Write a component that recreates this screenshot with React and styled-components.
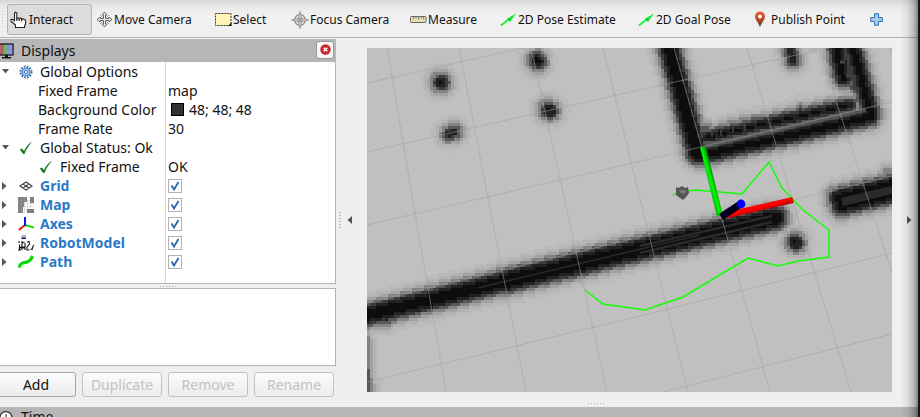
import React from "react";
import styled, { createGlobalStyle } from "styled-components";

const Global = createGlobalStyle`
  * { box-sizing: border-box; }
  body {
    margin: 0;
    background: #efefef;
    color: #111;
    font-family: "Noto Sans", "Open Sans", sans-serif;
    font-size: 14px;
    overflow: hidden;
  }
  button { font: inherit; color: inherit; }
  svg { display: block; }
`;

const Window = styled.div`
  position: relative;
  display: flex;
  flex-direction: column;
  height: 100vh;
  overflow: hidden;
`;

const EdgeShade = styled.div`
  position: absolute;
  top: 0;
  right: 0;
  bottom: 0;
  width: 20px;
  pointer-events: none;
  background: linear-gradient(
    to right,
    rgba(0, 0, 0, 0) 0,
    rgba(0, 0, 0, 0.08) 8px,
    rgba(0, 0, 0, 0.24) 14px,
    rgba(0, 0, 0, 0.45) 18px,
    #151719 18px
  );
`;

const Toolbar = styled.header`
  display: flex;
  flex: none;
  align-items: center;
  height: 38px;
  padding-top: 2px;
  padding-left: 7px;
  border-bottom: 1px solid #b4b4b4;
  background: linear-gradient(#d6d6d6 0, #e9e9e9 6px, #f1f1f1 16px, #efefef);
  background-color: #efefef;
`;

const Handle = styled.span`
  flex: none;
  width: 1px;
  height: 17px;
  margin: 0 0 0 -5px;
  background: repeating-linear-gradient(#bbb 0 1px, transparent 1px 3px);
`;

const Tool = styled.button`
  display: flex;
  flex: none;
  align-items: center;
  gap: 1px;
  width: ${(p) => p.$w}px;
  height: 31px;
  margin: 0;
  margin-right: ${(p) => (p.$active ? 3 : 0)}px;
  padding: 0 ${(p) => (p.$active ? 2 : 0)}px;
  border: 1px solid ${(p) => (p.$active ? "#b2b2b2" : "transparent")};
  border-radius: 3px;
  background: ${(p) => (p.$active ? "#dcdcdc" : "transparent")};
  font-size: 12px;
  line-height: 18px;
  white-space: nowrap;
  svg { flex: none; }
`;

const FirstTool = styled(Tool)`
  margin-left: 4px;
`;

const Main = styled.div`
  display: flex;
  flex: 1;
  min-height: 0;
`;

const LeftDock = styled.section`
  display: flex;
  flex: none;
  flex-direction: column;
  width: 336px;
  padding-top: 1px;
`;

const DockTitle = styled.div`
  display: flex;
  flex: none;
  align-items: center;
  height: 23px;
  background: #b6b6b6;
  h2 {
    flex: 1;
    margin: 0 0 0 7px;
    font-size: 14px;
    font-weight: 400;
    line-height: 20px;
  }
`;

const CloseButton = styled.button`
  display: grid;
  place-items: center;
  width: 18px;
  height: 18px;
  margin: 0 2px 2px 0;
  padding: 0;
  border: 1px solid #999;
  border-radius: 3px;
  background: #f6f6f6;
`;

const Tree = styled.div`
  flex: 1;
  min-height: 0;
  border-right: 1px solid #b4b4b4;
  border-bottom: 1px solid #b4b4b4;
  background: linear-gradient(#d4d4d4, #d4d4d4) 165px 0 / 1px 100% no-repeat #fff;
`;

const TreeRow = styled.div`
  display: grid;
  grid-template-columns: 166px 1fr;
  align-items: center;
  height: 19px;
  line-height: 19px;
  white-space: nowrap;
`;

const NameCell = styled.div`
  display: flex;
  align-items: center;
  height: 19px;
  padding-left: ${(p) => p.$indent || 0}px;
`;

const Name = styled.span`
  margin-left: ${(p) => (p.$plain ? 0 : 6)}px;
  color: ${(p) => (p.$link ? "#2b79c8" : "#111")};
  font-weight: ${(p) => (p.$link ? 700 : 400)};
`;

const IconSlot = styled.span`
  display: grid;
  place-items: center;
  width: 16px;
  height: 16px;
`;

const Expander = styled.button`
  display: grid;
  place-items: center start;
  width: 18px;
  height: 19px;
  padding: 0 0 0 2px;
  border: 0;
  background: none;
`;

const Value = styled.div`
  display: flex;
  align-items: center;
  gap: 5px;
  padding-left: 2px;
`;

const Swatch = styled.span`
  width: 13px;
  height: 13px;
  margin-left: 3px;
  border: 1px solid #000;
  background: #303030;
`;

const CheckLabel = styled.label`
  display: grid;
  width: 14px;
  height: 14px;
  > * { grid-area: 1 / 1; }
  svg { pointer-events: none; visibility: hidden; }
  input:checked + svg { visibility: visible; }
`;

const CheckInput = styled.input`
  appearance: none;
  width: 14px;
  height: 14px;
  margin: 0;
  border: 1px solid #b2b2b2;
  background: #fff;
`;

const HSplitter = styled.div`
  display: flex;
  flex: none;
  align-items: center;
  justify-content: center;
  height: ${(p) => p.$h}px;
  &::after {
    content: "";
    width: 16px;
    height: 1px;
    background: repeating-linear-gradient(to right, #aaa 0 1px, transparent 1px 3px);
  }
`;

const BottomSplitter = styled(HSplitter)`
  padding: 7px 68px 0 0;
`;

const Description = styled.div`
  flex: none;
  height: 78px;
  border: solid #b4b4b4;
  border-width: 1px 1px 1px 0;
  background: #fff;
`;

const ButtonRow = styled.div`
  display: grid;
  grid-template-columns: repeat(4, 1fr);
  flex: none;
  gap: 6px;
  margin-left: -4px;
  padding: 6px 2px 10px 0;
`;

const PushButton = styled.button`
  height: 25px;
  padding: 0;
  border: 1px solid #a6a6a6;
  border-radius: 3px;
  background: linear-gradient(#fcfcfc, #ececec);
  line-height: 20px;
  &:disabled { border-color: #c2c2c2; color: #c2c2c2; }
`;

const VSplitter = styled.div`
  display: flex;
  flex: none;
  align-items: center;
  width: 6px;
  padding: 0 1px 6px 3px;
  &::after {
    content: "";
    width: 2px;
    height: 16px;
    background: repeating-linear-gradient(#bbb 0 1px, transparent 1px 3px);
  }
`;

const Collapse = styled.button`
  display: flex;
  flex: none;
  align-items: center;
  justify-content: center;
  width: ${(p) => p.$w}px;
  padding: 0 ${(p) => p.$right || 0}px 6px ${(p) => p.$left || 0}px;
  border: 0;
  background: none;
`;

const ViewArea = styled.main`
  display: flex;
  flex: 1;
  flex-direction: column;
  min-width: 0;
  padding-top: 10px;
`;

const View = styled.div`
  flex: 1;
  min-height: 0;
  svg { width: 100%; height: 100%; }
`;

const TimeDock = styled.footer`
  display: flex;
  flex: none;
  align-items: flex-start;
  gap: 7px;
  height: 10px;
  padding-top: 3px;
  overflow: hidden;
  background: #b6b6b6;
  line-height: 14px;
  svg { flex: none; }
`;

/* ---------- toolbar icons ---------- */

const HandIcon = () => (
  <svg width="18" height="18" viewBox="0 0 18 18" fill="#fff" stroke="#222" strokeWidth="1.1" strokeLinejoin="round">
    <path d="M5.5 16.5V14L1.2 10.5 .8 8.6 2.400 8.2 4.500 10V2L5.500 1.200 6.800 2V8L8 6.800 9.2 7.400V8.4L10.4 7 11.600 7.600V9L13 7.800 15.600 9.2V13L14.6 14.6V16.5Z" />
    <path d="M6.800 8V10M9.2 8.4V10M11.600 9V10.4" />
  </svg>
);

const MoveIcon = () => (
  <svg width="17" height="17" viewBox="0 0 17 17" fill="#eee" stroke="#666" strokeWidth="1">
    <path d="M8.5 1 11 4H9.5V7.5H13V6L16 8.5 13 11V9.5H9.5V13H11L8.5 16 6 13H7.5V9.5H4V11L1 8.5 4 6V7.5H7.5V4H6Z" />
    <path d="M4 4 7 7M13 4 10 7M4 13 7 10M13 13 10 10" strokeDasharray="1 1" />
  </svg>
);

const SelectIcon = () => (
  <svg width="17" height="15" viewBox="0 0 17 15">
    <rect x=".5" y="1.500" width="15.500" height="12" fill="#fff5b8" stroke="#333" strokeDasharray="2 1" />
    <path d="M16.500 10.500V14H13Z" fill="#111" />
  </svg>
);

const FocusIcon = () => (
  <svg width="18" height="18" viewBox="0 0 18 18" fill="none" stroke="#888" strokeWidth="1.2">
    <circle cx="9" cy="9" r="5.3" />
    <circle cx="9" cy="9" r="2.5" />
    <path d="M9 .5 10 4V14L9 17.5 8 14V4ZM.5 9 4 8H14L17.5 9 14 10H4Z" fill="#ddd" strokeWidth=".8" />
  </svg>
);

const RulerIcon = () => (
  <svg width="17" height="9" viewBox="0 0 17 9">
    <rect x=".5" y="1.5" width="15.5" height="6" rx="1" fill="#e8dfb4" stroke="#666" />
    <path d="M3.5 2V4.5M6 2V4M8.5 2V4.5M11 2V4M13.5 2V4.5" stroke="#776" strokeWidth=".8" />
  </svg>
);

const ArrowIcon = () => (
  <svg width="17" height="15" viewBox="0 0 17 15">
    <path d="M.8 13.500 8 8" stroke="#1ef23c" strokeWidth="2" />
    <path d="M16 1.500 10 10 9 8.800 7.800 8.800 6.800 6.800Z" fill="#10ee38" />
    <path d="M8.500 6.800 10 8.500" stroke="#138a28" />
  </svg>
);

const PinIcon = () => (
  <svg width="17" height="17" viewBox="0 0 17 17">
    <defs>
      <linearGradient id="pin" x2="0" y2="1">
        <stop stopColor="#ee5838" />
        <stop offset=".55" stopColor="#b34d2c" />
        <stop offset="1" stopColor="#3a3a16" />
      </linearGradient>
    </defs>
    <path d="M7 16.500C6 12 2 9.5 2 5.600A5 5 0 0 1 12 5.600C12 9.5 8 12 7 16.500Z" fill="url(#pin)" />
    <circle cx="7" cy="5.5" r="1.9" fill="#fff" />
  </svg>
);

const PlusIcon = () => (
  <svg width="13" height="13" viewBox="0 0 13 13">
    <path d="M4.5 .7H8.5V4.5H12.3V8.5H8.5V12.3H4.5V8.5H.7V4.5H4.5Z" fill="#a9cbea" stroke="#3572b4" strokeLinejoin="round" />
  </svg>
);

/* ---------- tree icons ---------- */

const OpenMark = () => (
  <svg width="7" height="5" viewBox="0 0 7 5"><path d="M0 0H7L3.5 4.5Z" fill="#555" /></svg>
);
const ClosedMark = ({ flip }) => (
  <svg width="5" height="8" viewBox="0 0 5 8">
    <path d={flip ? "M5 0V8L.5 4Z" : "M0 0V8L4.5 4Z"} fill="#555" />
  </svg>
);

const MonitorIcon = () => (
  <svg width="14" height="16" viewBox="0 0 14 16">
    <defs>
      <linearGradient id="screen">
        <stop stopColor="#c55" />
        <stop offset=".35" stopColor="#a66" />
        <stop offset=".4" stopColor="#6bb56f" />
        <stop offset=".65" stopColor="#6bb57f" />
        <stop offset=".72" stopColor="#88e" />
        <stop offset="1" stopColor="#a9e" />
      </linearGradient>
    </defs>
    <rect x="-2" y="1" width="15" height="11" fill="url(#screen)" stroke="#111" strokeWidth="1.2" />
    <path d="M5 12H8V14H11V15.5H2V14H5Z" fill="#111" />
  </svg>
);

const GearIcon = () => (
  <svg width="14" height="14" viewBox="0 0 14 14" fill="none">
    <circle cx="7" cy="7" r="5.5" stroke="#3d74b8" strokeWidth="2" strokeDasharray="1.7 1.18" />
    <circle cx="7" cy="7" r="4" fill="#a9c8ea" stroke="#4a80c0" />
    <circle cx="7" cy="7" r="1.6" fill="#fff" stroke="#4a80c0" />
  </svg>
);

const TickIcon = () => (
  <svg width="14" height="14" viewBox="0 0 14 14">
    <path d="M.8 8.5 3 7.5 5 10C7 6 9.5 2.5 13.3 .6 10 4.2 7.5 8 5.5 13H4.2Z" fill="#1e7a24" />
  </svg>
);

const GridIcon = () => (
  <svg width="14" height="10" viewBox="0 0 14 10" fill="none" stroke="#444" strokeWidth="1.2">
    <path d="M7 1 13 5 7 9 1 5ZM4 3 10 7M10 3 4 7" />
  </svg>
);

const MapIcon = () => (
  <svg width="16" height="16" viewBox="0 0 16 16">
    <path d="M3.5 0V16M6.5 5V16M9.5 3V12M12.5 6V12M0 3.5H16M0 6.5H16M0 9.5H16M0 12.5H16" stroke="#ccc" strokeWidth=".6" />
    <path d="M0 0H9V5H6V10H5V16H0ZM12 0H16V6H12ZM9 12H16V16H9Z" fill="#808080" />
    <path d="M3.5 0V16M6.5 0V5M0 3.5H9M0 6.5H6M0 9.5H5M0 12.5H5" stroke="#999" strokeWidth=".5" />
  </svg>
);

const AxesIcon = () => (
  <svg width="16" height="16" viewBox="0 0 16 16" strokeWidth="2">
    <path d="M7 9 .8 14" stroke="#e11" />
    <path d="M7 9 16 11.5" stroke="#1d1" />
    <path d="M7 10V1" stroke="#11e" />
  </svg>
);

const RobotIcon = () => (
  <svg width="16" height="16" viewBox="0 0 16 16" fill="none" stroke="#151515" strokeWidth="1.1">
    <path d="M3.500 1.5 6 .6 8 1.5" stroke="#779" />
    <path d="M3.5 3.2H7.8" stroke="#225" strokeWidth="1.8" />
    <path d="M1 6V8M1.500 9.500V15M0 15H3M4 6V15M4 8 6.500 7M7 8V15M9 7 11 6.5 11.5 9 9 12V15H11.5M12.500 14 14 14.5 15.5 10" />
    <path d="M1 12.500H7" strokeWidth="1.8" />
  </svg>
);

const PathIcon = () => (
  <svg width="16" height="14" viewBox="0 0 16 14">
    <path d="M1 12.5C3 6.5 5.5 8.5 9 7S13 4.5 14.5 1" fill="none" stroke="#0ad80a" strokeWidth="3.2" />
  </svg>
);

const ClockIcon = () => (
  <svg width="14" height="14" viewBox="0 0 14 14">
    <circle cx="6" cy="7.5" r="6" fill="#fff" stroke="#444" strokeWidth="1.5" />
    <path d="M6 4V8H9" fill="none" stroke="#222" />
  </svg>
);

/* ---------- map drawing ---------- */

// Obstacles as [x1, y1, x2, y2, half width of the solid core]
const WALLS = [
  [666, 36, 697, 153, 5],
  [700, 156, 870, 117, 3],
  [707, 137, 850, 105, 1],
  [850, 36, 871, 115, 3],
  [834, 36, 843, 78, 3],
  [840, 36, 856, 90, -3],
  [838, 198, 900, 183, 4],
  [841, 206, 900, 192, 4],
  [355, 318, 503, 282, 5],
  [503, 282, 620, 254, 6],
  [620, 254, 775, 218, 6],
  [360, 340, 364, 400, 0],
  [787, 36, 793, 61, 0],
  [441, 82, 441, 83, 2],
  [537, 60, 538, 62, 2],
  [449, 134, 454, 132, 0],
  [548, 110, 550, 111, 2],
  [795, 242, 796, 243, 2],
];

// Small bumps of half-known cells next to the walls: [x, y, offset]
const BUMPS = [
  [707, 129, -3], [721, 128, -4], [732, 125, -4], [744, 121, -4], [754, 120, -4],
  [766, 118, -5], [801, 109, -3], [640, 236, -6], [887, 171, -5], [812, 45, -8],
  [402, 312, -1], [386, 320, -2],
];

const LEVELS = [
  [0, "#0d0d0d"], [3, "#222"], [4.5, "#3c3c3c"], [6.5, "#585858"], [9, "#848484"],
  [11.5, "#a3a3a3"], [14.5, "#b3b3b3"], [18, "#bbb"],
];

const distance = (px, py, [x1, y1, x2, y2]) => {
  const dx = x2 - x1;
  const dy = y2 - y1;
  const t = Math.max(0, Math.min(1, ((px - x1) * dx + (py - y1) * dy) / (dx * dx + dy * dy)));
  return Math.hypot(px - x1 - t * dx, py - y1 - t * dy);
};

const CELL = 3;

const buildCells = () => {
  const paths = LEVELS.map(() => "");
  for (let y = 48; y < 392; y += CELL) {
    for (let x = 367; x < 892; x += CELL) {
      const cx = x + CELL / 2;
      const cy = y + CELL / 2;
      let best = 99;
      for (const w of WALLS) best = Math.min(best, distance(cx, cy, w) - w[4]);
      for (const [bx, by, off] of BUMPS) best = Math.min(best, Math.hypot(cx - bx, cy - by) - off);
      const level = LEVELS.findIndex(([limit]) => best <= limit);
      if (level >= 0) paths[level] += `M${x} ${y}h${CELL}v${CELL}h-${CELL}z`;
    }
  }
  return paths;
};

const CELLS = buildCells();

const GRID_LINES = [
  "M387 48 415 213 446 392", "M459 48 492 218 526 392", "M531 48 568 215 607 392",
  "M603 48 649 235 688 392", "M674 48 725 230 770 392", "M747 48 810 258 851 392",
  "M819 48 838 107 892 272", "M890 48 892 53",
  "M367 83 523 48", "M367 152 630 92 828 48", "M367 225 620 166 892 102",
  "M367 303 640 237 892 176", "M367 382 640 316 892 253", "M663 392 892 334",
].join("");

const MapView = () => (
  <svg viewBox="367 48 525 344" preserveAspectRatio="xMidYMid slice" role="img" aria-label="Map view">
    <defs>
      <linearGradient id="green" gradientUnits="userSpaceOnUse" x1="708" y1="182" x2="715" y2="180">
        <stop stopColor="#0b0" /><stop offset=".4" stopColor="#0f0" /><stop offset="1" stopColor="#080" />
      </linearGradient>
      <linearGradient id="red" gradientUnits="userSpaceOnUse" x1="758" y1="204" x2="760" y2="212">
        <stop stopColor="#f00" /><stop offset=".5" stopColor="#f00" /><stop offset="1" stopColor="#900" />
      </linearGradient>
    </defs>
    <rect x="367" y="48" width="525" height="344" fill="#c0c0c0" />
    <g shapeRendering="crispEdges">
      {CELLS.map((d, i) => <path key={i} d={d} fill={LEVELS[i][1]} />)}
    </g>
    <g fill="none" stroke="#2a2a2a" strokeWidth="1.5">
      <path d="M478 288 620 254 700 235" />
      <path d="M640 253 772 222M640 246 772 216" strokeWidth="2.5" />
      <path d="M842 202 892 190" strokeWidth="8" />
      <path d="M712 130V137M721 128V136M733 125V133M745 122V131" stroke="#444" />
      <path d="M840 62H845M846 76H850M850 88H854" stroke="#444" strokeWidth="3" />
    </g>
    <path d="M704 147 866 110" stroke="#5c5c5c" strokeWidth="4" opacity=".7" />
    <path d={GRID_LINES} fill="none" stroke="#a0a0a0" strokeOpacity=".55" />
    <path
      d="M673 195 682 192 696 190 742 194 769 162 782 188 803 210 829 230 829 257 798 261 778 266 748 258 683 297 645 310 603 304 585 290"
      fill="none" stroke="#1f0" strokeWidth="1.5"
    />
    <path d="M676 187 679 188 682 186 685 188 688 187 689 193 686 197 683 200 680 198 676 195Z" fill="#555" />
    <path d="M679 190H686L685 194 680 193Z" fill="#777" />
    <path d="M723 216 793 200" stroke="url(#red)" strokeWidth="6" />
    <path d="M703 147 720 216" stroke="url(#green)" strokeWidth="6" />
    <path d="M721 217 739 205" stroke="#00001c" strokeWidth="7" />
    <circle cx="741" cy="204" r="4.4" fill="#00f" />
  </svg>
);

/* ---------- page ---------- */

const TOOLS = [
  { label: "Move Camera", icon: <MoveIcon />, w: 119 },
  { label: "Select", icon: <SelectIcon />, w: 76 },
  { label: "Focus Camera", icon: <FocusIcon />, w: 119 },
  { label: "Measure", icon: <RulerIcon />, w: 90 },
  { label: "2D Pose Estimate", icon: <ArrowIcon />, w: 138 },
  { label: "2D Goal Pose", icon: <ArrowIcon />, w: 115 },
  { label: "Publish Point", icon: <PinIcon />, w: 117 },
];

const DISPLAYS = [
  ["Grid", <GridIcon />], ["Map", <MapIcon />], ["Axes", <AxesIcon />],
  ["RobotModel", <RobotIcon />], ["Path", <PathIcon />],
];

const Branch = ({ label, icon, open, link, children }) => (
  <TreeRow>
    <NameCell>
      <Expander aria-label={`Toggle ${label}`} aria-expanded={!!open}>
        {open ? <OpenMark /> : <ClosedMark />}
      </Expander>
      <IconSlot>{icon}</IconSlot>
      <Name $link={link}>{label}</Name>
    </NameCell>
    <Value>{children}</Value>
  </TreeRow>
);

const Property = ({ label, children }) => (
  <TreeRow>
    <NameCell $indent={38}><Name $plain>{label}</Name></NameCell>
    <Value>{children}</Value>
  </TreeRow>
);

const Check = ({ label }) => (
  <CheckLabel>
    <CheckInput type="checkbox" defaultChecked aria-label={label} />
    <svg width="14" height="14" viewBox="0 0 14 14">
      <path d="M3.5 6.5 6 10.5 10.5 3" fill="none" stroke="#2a66a8" strokeWidth="1.8" />
    </svg>
  </CheckLabel>
);

export default function App() {
  return (
    <Window>
      <Global />
      <Toolbar>
        <Handle />
        <FirstTool $w={85} $active><HandIcon />Interact</FirstTool>
        {TOOLS.map((t) => (
          <Tool key={t.label} $w={t.w}>{t.icon}{t.label}</Tool>
        ))}
        <Tool $w={48} aria-label="Add tool"><PlusIcon /></Tool>
      </Toolbar>
      <Main>
        <LeftDock>
          <DockTitle>
            <MonitorIcon />
            <h2>Displays</h2>
            <CloseButton aria-label="Close displays">
              <svg width="11" height="11" viewBox="0 0 11 11">
                <circle cx="5.5" cy="5.5" r="5.2" fill="#c9252d" />
                <path d="M3.7 3.7 7.3 7.3M7.3 3.7 3.7 7.3" stroke="#fff" strokeWidth="1.5" />
              </svg>
            </CloseButton>
          </DockTitle>
          <Tree>
            <Branch label="Global Options" icon={<GearIcon />} open />
            <Property label="Fixed Frame">map</Property>
            <Property label="Background Color"><Swatch />48; 48; 48</Property>
            <Property label="Frame Rate">30</Property>
            <Branch label="Global Status: Ok" icon={<TickIcon />} open />
            <TreeRow>
              <NameCell $indent={38}>
                <IconSlot><TickIcon /></IconSlot>
                <Name>Fixed Frame</Name>
              </NameCell>
              <Value>OK</Value>
            </TreeRow>
            {DISPLAYS.map(([label, icon]) => (
              <Branch key={label} label={label} icon={icon} link><Check label={label} /></Branch>
            ))}
          </Tree>
          <HSplitter $h={4} />
          <Description />
          <ButtonRow>
            <PushButton>Add</PushButton>
            <PushButton disabled>Duplicate</PushButton>
            <PushButton disabled>Remove</PushButton>
            <PushButton disabled>Rename</PushButton>
          </ButtonRow>
        </LeftDock>
        <VSplitter />
        <Collapse $w={25} $right={10} aria-label="Collapse left panel"><ClosedMark flip /></Collapse>
        <ViewArea>
          <View><MapView /></View>
          <BottomSplitter $h={15} />
        </ViewArea>
        <Collapse $w={28} $left={6} aria-label="Expand right panel"><ClosedMark /></Collapse>
      </Main>
      <TimeDock><ClockIcon />Time</TimeDock>
      <EdgeShade />
    </Window>
  );
}
